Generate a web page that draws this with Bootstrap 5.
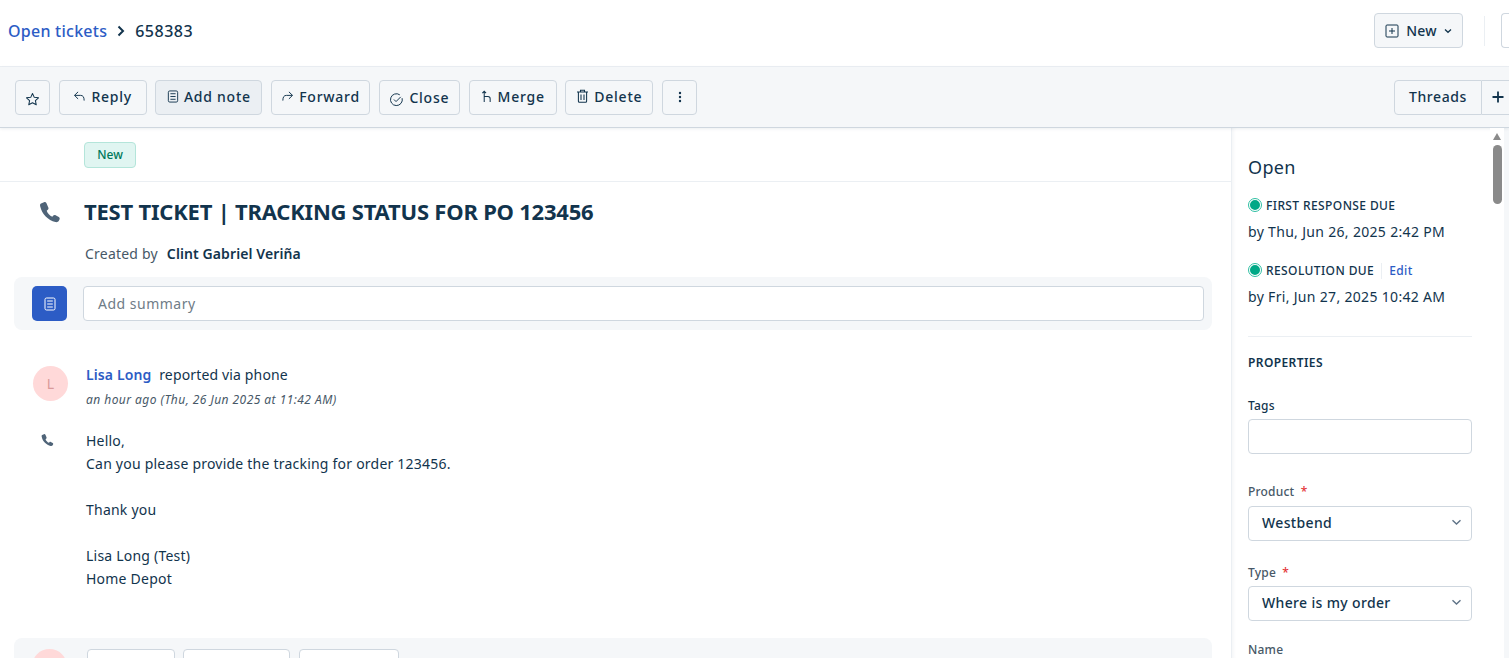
<!doctype html>
<html lang="en">
<head>
<meta charset="utf-8">
<title>Ticket 658383</title>
<link rel="stylesheet" href="https://cdn.jsdelivr.net/npm/bootstrap@5.3.0/dist/css/bootstrap.min.css">
<style>
html,body{height:658px;overflow:hidden;}
body{font-family:"Noto Sans",sans-serif;font-size:14px;letter-spacing:.22px;color:#12344d;background:#fff;}
.topbar{height:67px;padding:0 0 5px 8px;border-bottom:1px solid #ebeff3;overflow:hidden;}
.crumb-link{font-size:16px;font-weight:500;color:#2c5cc5;text-decoration:none;letter-spacing:.25px;}
.crumb-id{font-size:16px;font-weight:500;color:#12344d;letter-spacing:.5px;}
.crumb-sep{margin:0 10px;display:block;}
.tool{height:35px;display:inline-flex;align-items:center;justify-content:center;gap:5px;padding:0 0 2px;border:1px solid #cfd7df;border-radius:4px;background:#f5f7f9;color:#12344d;font-size:14px;font-weight:500;letter-spacing:.75px;white-space:nowrap;flex:none;}
.tool-active{background:#ebeff3;}
.tool-sq{width:35px;padding:0;}
.w-reply,.w-merge,.w-delete{width:88px;}
.w-note{width:107px;}
.w-fwd{width:99px;}
.w-close{width:81.2px;padding:0;}
.new-btn{width:89px;margin-left:auto;gap:7px;padding:0;letter-spacing:.2px;}
.vsep{width:1px;height:30px;background:#ebeff3;margin:0 16px 0 21px;flex:none;}
.stub{width:12px;height:35px;border:1px solid #cfd7df;border-right:0;border-radius:4px 0 0 4px;flex:none;margin-right:-4px;}
.toolbar{height:61px;background:#f5f7f9;border-bottom:1px solid #cfd7df;padding:0 0 0 15px;gap:8.7px;box-shadow:0 1px 3px rgba(18,52,77,.08);position:relative;overflow:hidden;}
.toolbar .split{margin-left:auto;margin-right:-4px;display:flex;}
.split .tool:first-child{border-radius:4px 0 0 4px;width:88px;letter-spacing:.6px;}
.split .tool:last-child{border-radius:0;border-left:0;width:31px;justify-content:flex-start;padding:0 0 0 10px;border-right:0;}
.workarea{height:531px;overflow:hidden;}
.main-col{width:1231px;flex:none;}
.status-row{height:54px;padding:14px 0 0 84px;border-bottom:1px solid #ebeff3;}
.new-tag{display:inline-block;height:26px;line-height:24px;width:52px;text-align:center;background:#e0f5f1;border:1px solid #b4e5da;border-radius:4px;color:#00795b;font-size:12px;font-weight:500;letter-spacing:0;}
.subject-row{height:45px;padding:0 0 0 39px;}
.subject-icon{margin-top:19px;flex:none;}
.subject{font-size:22px;font-weight:700;line-height:28px;margin:15px 0 0 23px;color:#12344d;letter-spacing:-.22px;}
.created{padding:17px 0 0 85px;line-height:20px;color:#475867;height:37px;}
.created b{color:#12344d;font-weight:600;margin-left:5px;letter-spacing:.1px;}
.summary-box{margin:13px 19px 0 14px;height:53px;background:#f5f7f9;border-radius:8px;padding:9px 8px 0 18px;gap:16px;}
.sum-icon{width:35px;height:35px;background:#2c5cc5;border-radius:5px;flex:none;}
.sum-input{flex:1;height:35px;border:1px solid #cfd7df;border-radius:4px;padding:0 14px;color:#6f7c87;background:#fff;line-height:33px;letter-spacing:.5px;}
.msg-head{padding:36px 0 0 33px;gap:18px;}
.avatar{width:35px;height:35px;border-radius:50%;background:#ffd9d9;color:#d99a9a;flex:none;font-size:14px;}
.who a{color:#2c5cc5;font-weight:600;text-decoration:none;margin-right:4px;letter-spacing:.12px;}
.who{line-height:20px;margin-top:-1px;letter-spacing:.15px;}
.when{font-size:12px;font-style:italic;color:#475867;line-height:16px;margin-top:7px;letter-spacing:.45px;}
.msg-body{padding:21px 0 0 41px;}
.msg-text{margin-left:32px;line-height:23px;}
.reply-box{margin:48px 19px 0 14px;height:60px;background:#f5f7f9;border-radius:8px;padding:11px 0 0 18px;gap:8.4px;}
.reply-av{width:35px;height:35px;border-radius:50%;background:#ffd9d9;margin-right:11.6px;flex:none;}
.ghost{height:30px;border:1px solid #cfd7df;border-radius:4px;background:#fff;}
.g1{width:88px}.g2{width:107px}.g3{width:100px}
.side{width:259px;flex:none;border-left:1px solid #ebeff3;box-shadow:inset 4px 0 4px -3px rgba(18,52,77,.06);padding:26px 18px 0 16px;}
.side-h{font-size:18px;line-height:26px;font-weight:400;margin:0 0 18px;letter-spacing:.35px;}
.sla{font-size:12px;font-weight:500;line-height:16px;gap:4px;letter-spacing:.4px;}
.dot{width:14px;height:14px;border-radius:50%;background:#00a886;border:2px solid #fff;outline:1.5px solid #2fbfa3;outline-offset:-1.5px;flex:none;margin-top:-2px;}
.sla-by{line-height:20px;margin-top:8px;letter-spacing:.32px;}
.sla-first{margin-bottom:21px;}
.sla a{color:#2c5cc5;text-decoration:none;border-left:1px solid #ebeff3;padding-left:7px;margin-left:3px;}
.side hr{margin:29px 0 18px;border-color:#ebeff3;opacity:1;}
.props{font-size:12px;font-weight:600;line-height:16px;margin-bottom:27px;letter-spacing:.4px;}
.fld{font-size:12px;font-weight:500;line-height:16px;color:#475867;margin-bottom:6px;letter-spacing:.2px;}
.fld-tags{color:#12344d;margin-bottom:5px;}
.fld-type{margin-bottom:5px;}
.req{color:#e43538;margin-left:3px;}
.ctl{height:35px;border:1px solid #cfd7df;border-radius:4px;background:#fff;padding:0 9px 2px 13px;font-weight:500;letter-spacing:.35px;}
.gap-a{margin-bottom:30px;padding:0;}
.gap-b{margin-bottom:24px;}
.gap-c{margin-bottom:21px;}
.rail{width:14px;flex:none;position:relative;background:#fff;}
.thumb{position:absolute;left:3px;top:17px;width:9px;height:59px;background:#8a8a8a;border-radius:5px;}
.arrow{position:absolute;left:3px;top:5px;width:0;height:0;border-left:4.5px solid transparent;border-right:4.5px solid transparent;border-bottom:7px solid #8a8a8a;}
.edge{flex:1;background:#f5f7f9;}
</style>
</head>
<body>
<header class="topbar d-flex align-items-center">
  <a class="crumb-link" href="#">Open tickets</a>
  <svg class="crumb-sep" width="8" height="12" viewBox="0 0 8 12" fill="none" stroke="#12344d" stroke-width="2"><path d="M1.500 1.500 6 6l-4.500 4.500"/></svg>
  <span class="crumb-id">658383</span>
  <button class="tool new-btn" type="button">
    <svg width="14" height="14" viewBox="0 0 14 14" fill="none" stroke="#12344d" stroke-width="1"><rect x="1" y="1" width="12" height="12" rx="1"/><path d="M7 4v6M4 7h6"/></svg>New
    <svg width="8" height="6" viewBox="0 0 8 6" fill="none" stroke="#12344d" stroke-width="1.3"><path d="M1 1.500 4 4.300l3-2.800"/></svg>
  </button>
  <span class="vsep"></span>
  <span class="stub"></span>
</header>
<div class="toolbar d-flex align-items-center">
  <button class="tool tool-sq" type="button" aria-label="Star"><svg class="mt-1" width="15" height="15" viewBox="0 0 16 16" fill="none" stroke="#12344d" stroke-width="1.1" stroke-linejoin="round"><path d="M8 1.600l1.900 4.100 4.500.5-3.300 3 .9 4.400L8 11.400l-4 2.200.9-4.400-3.300-3 4.500-.5z"/></svg></button>
  <button class="tool w-reply" type="button"><svg width="13" height="13" viewBox="0 0 14 14" fill="none" stroke="#12344d" stroke-width="1.05"><path d="M5.500 2 1.600 5.800l3.900 3.800M1.800 5.800h6.400c2.600 0 3.800 1.800 3.800 5.600"/></svg>Reply</button>
  <button class="tool tool-active w-note" type="button"><svg width="12" height="13" viewBox="0 0 12 14" fill="none" stroke="#12344d" stroke-width="1"><rect x="1" y="1" width="10" height="12" rx="1.500"/><path d="M3.200 4h5.600M3.200 7h5.600M3.200 10h5.600"/></svg>Add note</button>
  <button class="tool w-fwd" type="button"><svg width="13" height="13" viewBox="0 0 14 14" fill="none" stroke="#12344d" stroke-width="1.05"><path d="M8.500 2l3.900 3.800-3.900 3.800M12.200 5.800H5.800C3.200 5.800 2 7.600 2 11.400"/></svg>Forward</button>
  <button class="tool w-close" type="button"><svg class="mt-1" width="15" height="15" viewBox="0 0 16 16" fill="none" stroke="#12344d" stroke-width="1.05"><path d="M14 6.600A6.300 6.300 0 1 1 11.500 3"/><path d="M5.300 8l2.200 2.200 5-5"/></svg>Close</button>
  <button class="tool w-merge" type="button"><svg width="12" height="13" viewBox="0 0 12 14" fill="none" stroke="#12344d" stroke-width="1.1"><path d="M3 13V1.500M1 3.400 3 1.400l2 2M3 7h4c1.600 0 2.400.8 2.400 2.400V13"/></svg>Merge</button>
  <button class="tool w-delete" type="button"><svg width="13" height="14" viewBox="0 0 13 14" fill="none" stroke="#12344d" stroke-width="1.05"><path d="M1 3h11M4.500 3V1.200h4V3M2.400 3v9.200c0 .6.4 1 1 1h6.200c.6 0 1-.4 1-1V3M5 5.500v5.500M8 5.500v5.500"/></svg>Delete</button>
  <button class="tool tool-sq" type="button" aria-label="More"><svg width="4" height="12" viewBox="0 0 4 12" fill="#12344d"><circle cx="2" cy="2" r="1.200"/><circle cx="2" cy="6" r="1.200"/><circle cx="2" cy="10" r="1.200"/></svg></button>
  <div class="split">
    <button class="tool" type="button">Threads</button>
    <button class="tool" type="button" aria-label="Add"><svg width="12" height="12" viewBox="0 0 12 12" fill="none" stroke="#12344d" stroke-width="1.800"><path d="M6 .5v11M.5 6h11"/></svg></button>
  </div>
</div>
<div class="workarea d-flex">
  <main class="main-col">
    <div class="status-row"><span class="new-tag">New</span></div>
    <div class="subject-row d-flex align-items-start">
      <svg class="subject-icon" width="22" height="22" viewBox="0 0 22 22" fill="#4f6478"><path d="M5 1.200 2 2.600C.9 3.200.9 4.400 1.300 5.800c1 4 2.600 7 5.400 9.700 2.600 2.500 6 4.800 9.700 5.600 1.500.3 3-.2 3.600-1.500l.6-1.400c.3-.9 0-1.800-.8-2.200l-3.200-1.800c-.8-.4-1.700-.3-2.300.4l-1 1.100c-2.700-1.200-4.600-3.300-5.600-6l1.100-.9c.7-.6.9-1.500.5-2.300L7.500 2.300C7 1.200 6 .8 5 1.200z"/></svg>
      <h1 class="subject">TEST TICKET | TRACKING STATUS FOR PO 123456</h1>
    </div>
    <div class="created">Created by <b>Clint Gabriel Veriña</b></div>
    <div class="summary-box d-flex">
      <div class="sum-icon d-flex align-items-center justify-content-center"><svg width="12" height="14" viewBox="0 0 12 14" fill="none" stroke="#fff" stroke-width="1"><rect x="1" y="1" width="10" height="12" rx="1.500"/><path d="M3.200 4h5.600M3.200 7h5.600M3.200 10h5.600"/></svg></div>
      <div class="sum-input">Add summary</div>
    </div>
    <div class="msg-head d-flex">
      <div class="avatar d-flex align-items-center justify-content-center">L</div>
      <div>
        <div class="who"><a href="#">Lisa Long</a> reported via phone</div>
        <div class="when">an hour ago (Thu, 26 Jun 2025 at 11:42 AM)</div>
      </div>
    </div>
    <div class="msg-body d-flex align-items-start">
      <svg class="mt-1" width="13" height="14" viewBox="0 0 22 22" fill="#4f6478"><path d="M5 1.200 2 2.600C.9 3.200.9 4.400 1.300 5.800c1 4 2.600 7 5.400 9.700 2.600 2.500 6 4.800 9.700 5.600 1.500.3 3-.2 3.600-1.500l.6-1.400c.3-.9 0-1.800-.8-2.200l-3.200-1.800c-.8-.4-1.700-.3-2.300.4l-1 1.100c-2.700-1.200-4.600-3.300-5.600-6l1.100-.9c.7-.6.9-1.500.5-2.300L7.500 2.300C7 1.200 6 .8 5 1.200z"/></svg>
      <div class="msg-text">Hello,<br>Can you please provide the tracking for order 123456.<br><br>Thank you<br><br>Lisa Long (Test)<br>Home Depot</div>
    </div>
    <div class="reply-box d-flex">
      <div class="reply-av"></div>
      <div class="ghost g1"></div>
      <div class="ghost g2"></div>
      <div class="ghost g3"></div>
    </div>
  </main>
  <aside class="side">
    <h2 class="side-h">Open</h2>
    <div class="sla d-flex align-items-center"><span class="dot"></span>FIRST RESPONSE DUE</div>
    <div class="sla-by sla-first">by Thu, Jun 26, 2025 2:42 PM</div>
    <div class="sla d-flex align-items-center"><span class="dot"></span>RESOLUTION DUE <a href="#">Edit</a></div>
    <div class="sla-by">by Fri, Jun 27, 2025 10:42 AM</div>
    <hr>
    <div class="props">PROPERTIES</div>
    <div class="fld fld-tags">Tags</div>
    <div class="ctl gap-a"></div>
    <div class="fld">Product <span class="req">*</span></div>
    <div class="ctl gap-b d-flex align-items-center justify-content-between">Westbend<svg width="11" height="7" viewBox="0 0 10 7" fill="none" stroke="#5f7387" stroke-width="1.400"><path d="M1 1.200 5 5l4-3.800"/></svg></div>
    <div class="fld fld-type">Type <span class="req">*</span></div>
    <div class="ctl gap-c d-flex align-items-center justify-content-between">Where is my order<svg width="11" height="7" viewBox="0 0 10 7" fill="none" stroke="#5f7387" stroke-width="1.400"><path d="M1 1.200 5 5l4-3.800"/></svg></div>
    <div class="fld">Name</div>
  </aside>
  <div class="rail"><span class="arrow"></span><span class="thumb"></span></div>
  <div class="edge"></div>
</div>
</body>
</html>
